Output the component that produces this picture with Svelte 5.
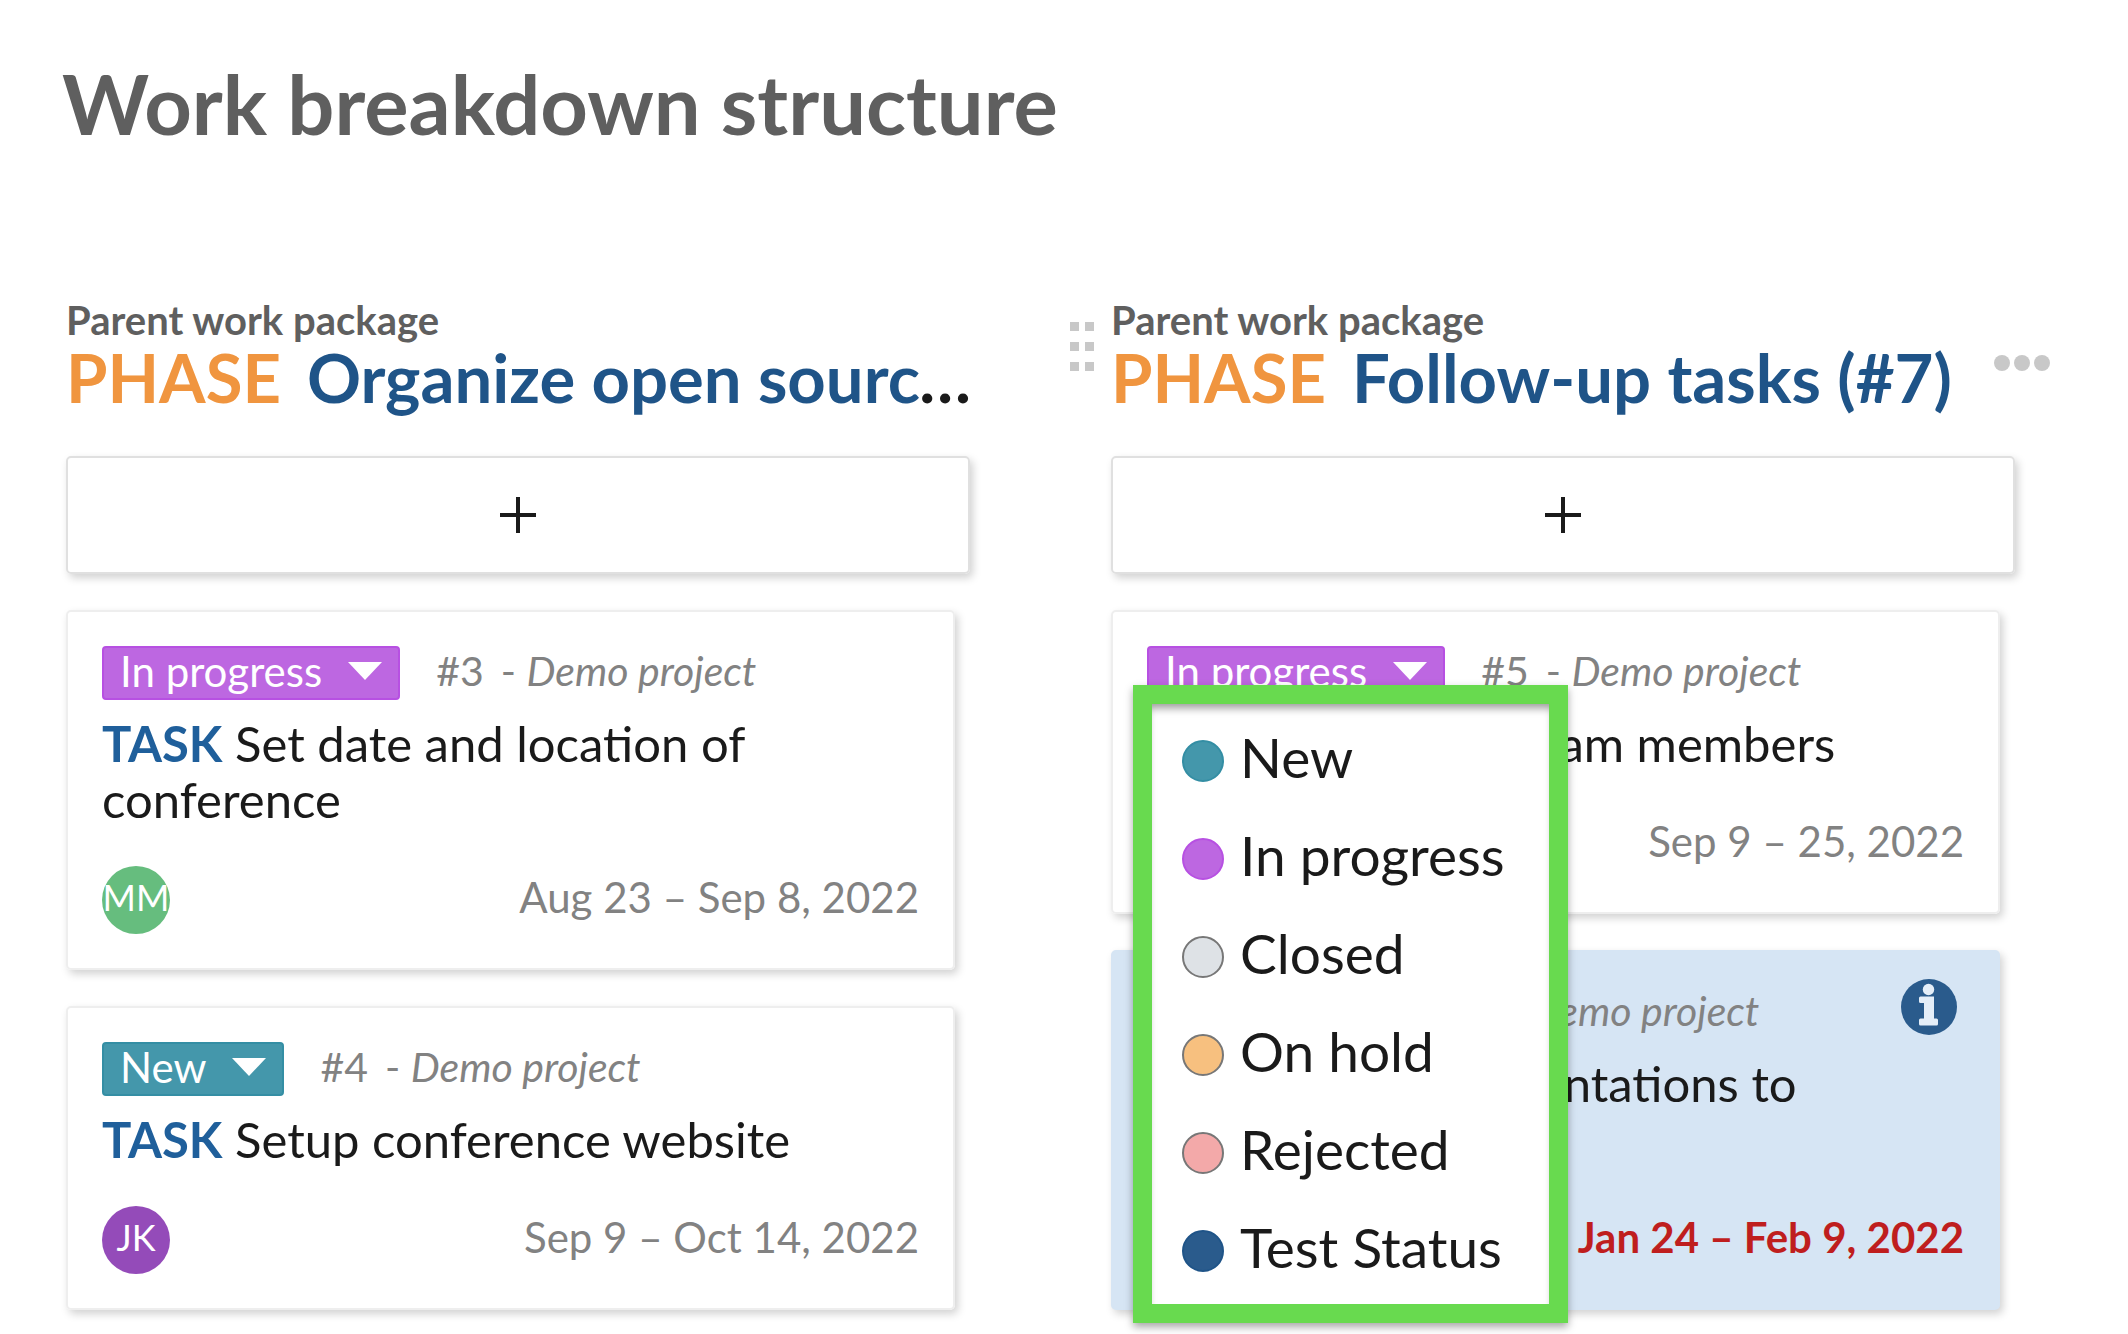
<script>
    let openMenu = 5

    const statuses = [
        { name: 'New', key: 'new' },
        { name: 'In progress', key: 'progress' },
        { name: 'Closed', key: 'closed' },
        { name: 'On hold', key: 'hold' },
        { name: 'Rejected', key: 'rejected' },
        { name: 'Test Status', key: 'test' }
    ]

    let columns = [
        {
            title: 'Organize open source conference (#2)',
            active: false,
            cards: [
                { id: 3, status: 'In progress', subject: 'Set date and location of conference', user: 'MM', dates: 'Aug 23 – Sep 8, 2022' },
                { id: 4, status: 'New', subject: 'Setup conference website', user: 'JK', dates: 'Sep 9 – Oct 14, 2022' }
            ]
        },
        {
            title: 'Follow-up tasks (#7)',
            active: true,
            cards: [
                { id: 5, status: 'In progress', subject: 'Invite new team members', user: 'MM', dates: 'Sep 9 – 25, 2022' },
                { id: 8, status: 'Rejected', subject: 'Upload presentations to website', user: 'JK', dates: 'Jan 24 – Feb 9, 2022', selected: true, overdue: true }
            ]
        }
    ]

    function keyOf(name) {
        return statuses.find((s) => s.name == name).key
    }

    function toggle(id) {
        openMenu = openMenu == id ? null : id
    }

    function setStatus(card, name) {
        card.status = name
        columns = columns
        openMenu = null
    }
</script>

<main>
    <h1>Work breakdown structure</h1>

    <div class="board">
        {#each columns as column}
            <section class="column">
                <header>
                    {#if column.active}
                        <svg class="handle" viewBox="0 0 24 50" aria-hidden="true">
                            <path d="M0 0h9v9H0zM15 0h9v9h-9zM0 20h9v9H0zM15 20h9v9h-9zM0 40h9v9H0zM15 40h9v9h-9z" />
                        </svg>
                    {/if}
                    <div class="heading">
                        <p>Parent work package</p>
                        <h2><span>PHASE</span><a href="#parent">{column.title}</a></h2>
                    </div>
                    {#if column.active}
                        <button class="more" aria-label="More actions">
                            <svg viewBox="0 0 56 16">
                                <circle cx="8" cy="8" r="8" />
                                <circle cx="28" cy="8" r="8" />
                                <circle cx="48" cy="8" r="8" />
                            </svg>
                        </button>
                    {/if}
                </header>

                <button class="add" aria-label="Add card">
                    <svg viewBox="0 0 36 36"><path d="M18 0v36M0 18h36" /></svg>
                </button>

                {#each column.cards as card}
                    <article class="card" class:selected={card.selected}>
                        <div class="meta">
                            <button class="status {keyOf(card.status)}" on:click={() => toggle(card.id)}>
                                {card.status}
                                <svg viewBox="0 0 34 18"><path d="M0 0h34L17 18z" /></svg>
                            </button>
                            <span class="id">#{card.id}</span>
                            <span class="project">- <i>Demo project</i></span>

                            {#if openMenu == card.id}
                                <ul class="menu">
                                    {#each statuses as { name, key }}
                                        <li>
                                            <button on:click={() => setStatus(card, name)}>
                                                <span class="dot {key}"></span>
                                                <span class="name">{name}</span>
                                            </button>
                                        </li>
                                    {/each}
                                </ul>
                            {/if}
                        </div>
                        <h3><b>TASK</b> {card.subject}</h3>
                        <footer>
                            <span class="avatar {card.user.toLowerCase()}">{card.user}</span>
                            <time class:overdue={card.overdue}>{card.dates}</time>
                        </footer>
                        {#if card.selected}
                            <button class="info" aria-label="Open details">
                                <svg viewBox="0 0 56 56">
                                    <circle cx="28" cy="28" r="28" />
                                    <g class="letter">
                                        <circle cx="27.500" cy="10.500" r="5.700" />
                                        <path d="M19.500 17.500H33v22h2.500a1.500 1.500 0 0 1 1.500 1.500v4a1.500 1.500 0 0 1-1.500 1.500h-16A1.500 1.500 0 0 1 18 45v-4a1.500 1.500 0 0 1 1.500-1.500H23V24h-3.500a1.500 1.500 0 0 1-1.500-1.500V19a1.500 1.500 0 0 1 1.500-1.500z" />
                                    </g>
                                </svg>
                            </button>
                        {/if}
                    </article>
                {/each}
            </section>
        {/each}
    </div>
</main>

<style>
    :global(body) {
        margin: 0;
        background: #fff;
    }

    main {
        font-family: Lato, sans-serif;
        font-size: 42px;
        color: #1a1a1a;
        padding: 53px 16px 20px 22px;
    }

    h1, h2, h3, p, ul {
        margin: 0;
        padding: 0;
    }

    button {
        font: inherit;
        color: inherit;
        background: none;
        border: 0;
        padding: 0;
        cursor: pointer;
    }

    svg {
        display: block;
    }

    h1 {
        font-size: 83px;
        line-height: 100px;
        color: #5f5f5f;
        padding-left: 40px;
    }

    .board {
        display: grid;
        grid-template-columns: repeat(2, minmax(0, 1fr));
        margin-top: 143px;
    }

    .column {
        padding: 0 97px 0 44px;
    }

    header {
        display: flex;
        height: 124px;
        margin-bottom: 36px;
    }

    .handle {
        flex: none;
        width: 24px;
        height: 50px;
        margin: 26px 17px 0 -41px;
        fill: #c8c8c8;
    }

    .heading {
        flex: 1;
        min-width: 0;
    }

    .heading p {
        padding-top: 3px;
        font-size: 40px;
        font-weight: bold;
        line-height: 42px;
        color: #5f5f5f;
    }

    h2 {
        font-size: 67px;
        line-height: 72px;
        margin: -5px -8px 0 0;
        padding: 5px 0 6px;
        white-space: nowrap;
        overflow: hidden;
        text-overflow: ellipsis;
    }

    h2 span {
        color: #f0953f;
        margin-right: 26px;
    }

    h2 a {
        color: #1f5488;
        text-decoration: none;
    }

    .more {
        flex: none;
        align-self: flex-start;
        width: 56px;
        margin: 59px -35px 0 18px;
        fill: #c8c8c8;
    }

    .add {
        display: flex;
        align-items: center;
        justify-content: center;
        box-sizing: border-box;
        width: 100%;
        height: 118px;
        margin-bottom: 36px;
        border: 2px solid #e0e0e0;
        border-radius: 5px;
        box-shadow: 3px 4px 8px rgba(0, 0, 0, 0.18);
    }

    .add svg {
        width: 36px;
        stroke: #1a1a1a;
        stroke-width: 4;
    }

    .card {
        position: relative;
        box-sizing: border-box;
        margin: 0 15px 36px 0;
        padding: 34px;
        border: 2px solid #eee;
        border-radius: 5px;
        box-shadow: 3px 4px 8px rgba(0, 0, 0, 0.18);
    }

    .selected {
        background: #d6e5f4;
        border-color: #d6e5f4;
    }

    .meta {
        position: relative;
        display: flex;
        align-items: center;
        color: #828282;
    }

    .status {
        display: flex;
        align-items: center;
        gap: 26px;
        box-sizing: border-box;
        height: 54px;
        padding: 0 16px 4px;
        margin-right: 36px;
        border: 2px solid;
        border-radius: 4px;
        line-height: 46px;
        color: #fff;
    }

    .status svg {
        width: 34px;
        fill: #fff;
    }

    .status.new { background: #4497ab; border-color: #348ea4; }
    .status.progress { background: #bd67e1; border-color: #b750e2; }
    .status.closed { background: #dee2e6; border-color: #777; }
    .status.hold { background: #f7c07f; border-color: #777; }
    .status.rejected { background: #f3a9a9; border-color: #777; }
    .status.test { background: #2a5b8c; border-color: #1f5488; }

    .id, .project {
        padding-bottom: 5px;
        font-size: 41px;
    }

    .project {
        margin-left: 17px;
    }

    h3 {
        font-size: 49px;
        font-weight: normal;
        line-height: 56px;
        margin: 15px 0 39px;
    }

    h3 b {
        color: #1f5f9b;
    }

    footer {
        display: flex;
        justify-content: space-between;
        height: 68px;
    }

    .avatar {
        width: 68px;
        border-radius: 50%;
        font-size: 36px;
        line-height: 62px;
        text-align: center;
        color: #fff;
    }

    .mm { background: #66bd7e; }
    .jk { background: #944bb9; }

    time {
        line-height: 62px;
        color: #828282;
    }

    .overdue {
        font-weight: bold;
        color: #bf1e1e;
    }

    .info {
        position: absolute;
        top: 27px;
        right: 41px;
        width: 56px;
        fill: #2a5b8c;
    }

    .letter {
        fill: #e4eef8;
    }

    .menu {
        position: absolute;
        z-index: 1;
        top: 39px;
        left: -14px;
        box-sizing: border-box;
        width: 435px;
        padding: 8px 0 4px 30px;
        border: 19px solid #68da4f;
        background: #fff;
        box-shadow: 0 4px 8px rgba(0, 0, 0, 0.35), inset 0 8px 8px -4px rgba(0, 0, 0, 0.4);
        list-style: none;
    }

    .menu button {
        display: flex;
        align-items: center;
        gap: 16px;
        height: 98px;
        font-size: 55px;
        color: #1a1a1a;
    }

    .name {
        padding-bottom: 8px;
    }

    .dot {
        box-sizing: border-box;
        width: 42px;
        height: 42px;
        border: 2px solid #777;
        border-radius: 50%;
    }

    .dot.new { background: #4497ab; border-color: #348ea4; }
    .dot.progress { background: #bd67e1; border-color: #b750e2; }
    .dot.closed { background: #dee2e6; }
    .dot.hold { background: #f7c07f; }
    .dot.rejected { background: #f3a9a9; }
    .dot.test { background: #2a5b8c; border-color: #1f5488; }
</style>
